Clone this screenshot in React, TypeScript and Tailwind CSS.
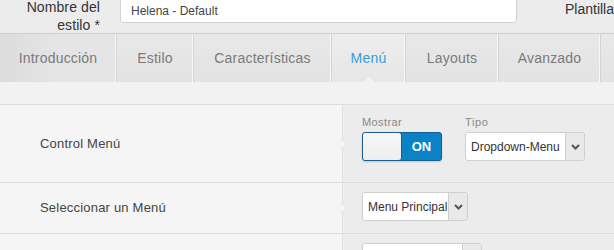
import React from "react";

const tabs = [
  { label: "Introducción", w: "w-[117px]" },
  { label: "Estilo", w: "w-[77px]" },
  { label: "Características", w: "w-[138px]" },
  { label: "Menú", w: "w-[74px]", active: true },
  { label: "Layouts", w: "w-[93px]" },
  { label: "Avanzado", w: "w-[102px]" },
  { label: "", w: "w-[60px]" },
];

function Chevron() {
  return (
    <svg width="9" height="6" viewBox="0 0 9 6">
      <path d="M1 1 L4.5 4.5 L8 1" fill="none" stroke="#555" strokeWidth="2" />
    </svg>
  );
}

function Select({ text, w }: { text: string; w: string }) {
  return (
    <div className={`flex h-[29px] ${w} rounded-[3px] border border-[#cfcfcf] bg-white overflow-hidden`}>
      <div className="flex-1 min-w-0 flex items-center pl-[5px] text-[12px] text-[#333] whitespace-nowrap overflow-hidden">{text}</div>
      <div className="w-[19px] shrink-0 flex items-center justify-center bg-[#e9e9e9] border-l border-[#cfcfcf]">
        <Chevron />
      </div>
    </div>
  );
}

function Notch() {
  return (
    <div className="absolute left-[-5px] top-1/2 -translate-y-1/2 w-[8px] h-[8px] rotate-45 bg-[#f5f5f5] border-t border-r border-[#e2e2e2]" />
  );
}

export default function App() {
  return (
    <div
      className="w-[614px] h-[250px] overflow-hidden bg-[#ececec]"
      style={{ fontFamily: '"Liberation Sans", Arial, sans-serif' }}
    >
      {/* header */}
      <div className="h-[33px] flex items-start overflow-hidden">
        <div className="w-[100px] mt-[-2px] text-right text-[14px] leading-[18px] text-[#333] tracking-[0.1px]">
          Nombre del
          <br />
          estilo *
        </div>
        <div className="ml-[20px] mt-[-4px] w-[397px] h-[27px] bg-white border border-[#d2d2d2] rounded-b-[3px] flex items-center pl-[10px] pt-[2px] text-[12px] text-[#444]">
          Helena - Default
        </div>
        <div className="ml-[48px] mt-[1px] text-[14px] leading-[16px] text-[#333] whitespace-nowrap">Plantilla</div>
      </div>

      {/* tabs */}
      <div className="h-[49px] flex border-t border-[#cdcdcd] bg-[#e5e5e5]">
        {tabs.map((t, i) => (
          <div
            key={i}
            className={`${t.w} shrink-0 relative flex items-center justify-center text-[14px] border-r border-[#d4d4d4] shadow-[inset_-1px_0_0_#f7f7f7] ${
              t.active
                ? "bg-gradient-to-b from-[#eeeeee] to-[#e6e6e6] text-[#3b9bd9]"
                : i === 0
                ? "bg-gradient-to-r from-[#dcdcdc] via-[#e5e5e5] to-[#e5e5e5] text-[#7a7a7a]"
                : "bg-gradient-to-b from-[#e8e8e8] to-[#e3e3e3] text-[#7a7a7a]"
            }`}
          >
            <span className="tracking-[0.2px]">{t.label}</span>
            {t.active && (
              <div className="absolute bottom-0 left-1/2 -translate-x-1/2 w-0 h-0 border-l-[6px] border-r-[6px] border-b-[5px] border-l-transparent border-r-transparent border-b-[#f2f2f2]" />
            )}
          </div>
        ))}
      </div>

      {/* band */}
      <div className="h-[23px] bg-[#f2f2f2] border-b border-[#dcdcdc]" />

      {/* row 1 */}
      <div className="flex h-[78px] border-b border-[#dcdcdc]">
        <div className="w-[343px] shrink-0 bg-[#f5f5f5] border-r border-[#e2e2e2] flex items-center pl-[40px] text-[13px] text-[#444] tracking-[0.2px]">
          Control Menú
        </div>
        <div className="flex-1 relative pl-[19px] pt-[11px] flex gap-[23px]">
          <Notch />
          <div className="flex flex-col">
            <div className="text-[11px] leading-[13px] text-[#888] tracking-[0.4px] h-[16px]">Mostrar</div>
            <div className="flex w-[80px] h-[29px] rounded-[3px] border border-[#1b5d93] overflow-hidden bg-[#0a83c6] shadow-[0_1px_2px_rgba(0,0,0,0.15)]">
              <div className="w-[39px] bg-gradient-to-b from-[#f7f7f7] to-[#eeeeee] border-r border-[#1b5d93] rounded-r-[3px]" />
              <div className="flex-1 flex items-center justify-center text-white font-bold text-[13px]">ON</div>
            </div>
          </div>
          <div className="flex flex-col">
            <div className="text-[11px] leading-[13px] text-[#888] tracking-[0.6px] h-[16px]">Tipo</div>
            <Select text="Dropdown-Menu" w="w-[120px]" />
          </div>
        </div>
      </div>

      {/* row 2 */}
      <div className="flex h-[51px] border-b border-[#dcdcdc]">
        <div className="w-[343px] shrink-0 bg-[#f5f5f5] border-r border-[#e2e2e2] flex items-center pl-[40px] text-[13px] text-[#444] tracking-[0.2px]">
          Seleccionar un Menú
        </div>
        <div className="flex-1 relative pl-[19px] pt-[9px]">
          <Notch />
          <Select text="Menu Principal" w="w-[106px]" />
        </div>
      </div>

      {/* row 3 */}
      <div className="flex h-[60px]">
        <div className="w-[343px] shrink-0 bg-[#f5f5f5] border-r border-[#e2e2e2]" />
        <div className="flex-1 relative pl-[19px] pt-[9px]">
          <Select text="" w="w-[120px]" />
        </div>
      </div>
    </div>
  );
}
